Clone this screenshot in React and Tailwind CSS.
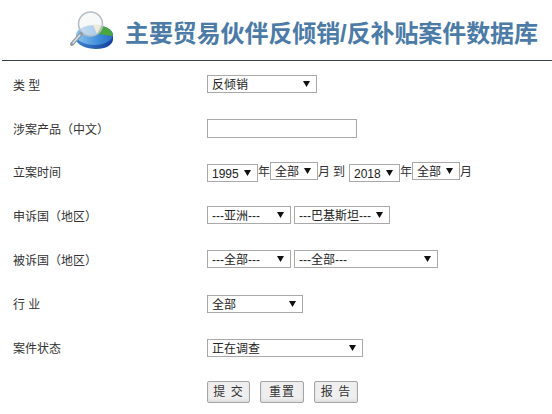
const Sel = ({ w, value, className = '' }) => (
  <div className={`relative shrink-0 h-[18px] ${w} ${className}`}>
    <select
      defaultValue={value}
      className="block w-full h-full appearance-none bg-white border border-[#a9a9a9] pl-[4px] pr-3 pt-[2px] text-[12px] leading-[14px] text-[#222] outline-none rounded-none"
    >
      <option>{value}</option>
    </select>
    <svg className="absolute right-[7px] top-[6px] pointer-events-none" width="7" height="6" viewBox="0 0 7 6">
      <path d="M0 0H7L3.5 6Z" fill="#111" />
    </svg>
  </div>
);

const Row = ({ label, children, labelClass = 'mt-[2px]', fieldClass = '' }) => (
  <div className="grid grid-cols-[207px_1fr] items-center h-[44px]">
    <div className={`pl-[13px] text-[12px] text-[#333] [text-spacing-trim:space-all] ${labelClass}`}>{label}</div>
    <div className={`flex items-center ${fieldClass}`}>{children}</div>
  </div>
);

const Btn = ({ children, w = 'w-[44px]' }) => (
  <button className={`${w} h-[22px] bg-[#efefef] border border-[#a5a5a5] rounded-[2px] text-[12px] tracking-[1px] text-[#333] shadow-[inset_0_-2px_3px_#dedede]`}>
    {children}
  </button>
);

function Logo() {
  return (
    <svg width="46" height="40" viewBox="0 0 46 40">
      <defs>
        <linearGradient id="pie" x1="0" y1="0" x2="1" y2="0">
          <stop offset="0" stopColor="#8cc4ee" />
          <stop offset="0.6" stopColor="#3f8fdb" />
          <stop offset="1" stopColor="#2a6cc0" />
        </linearGradient>
        <linearGradient id="side" x1="0" y1="0" x2="1" y2="0">
          <stop offset="0" stopColor="#3f86d2" />
          <stop offset="1" stopColor="#123f9c" />
        </linearGradient>
      </defs>
      <path d="M7 24V28C7 34 18 38 27 38C37 38 44 34 44 28V24Z" fill="url(#side)" />
      <ellipse cx="25.5" cy="24" rx="18.5" ry="10" fill="url(#pie)" />
      <path d="M30 15C37 15 44 19 44 25L29 23Z" fill="#4aa63f" />
      <path d="M24 14C27 13 30 14 32 15L28 23Z" fill="#e9dfae" />
      <circle cx="21.5" cy="13" r="12" fill="#f1f3f4" fillOpacity="0.6" stroke="#b4bdc5" strokeWidth="1.6" />
      <path d="M12 23L3 33" stroke="#8d9aa6" strokeWidth="4" strokeLinecap="round" />
      <path d="M11 24L4 32" stroke="#dfe6ea" strokeWidth="1.2" strokeLinecap="round" />
    </svg>
  );
}

export default function App() {
  return (
    <div className="w-[552px] h-[414px] overflow-hidden bg-white font-['Liberation_Sans','Noto_Sans_CJK_SC',sans-serif]">
      <div className="h-[61px] ml-[2px] border-b border-[#34424f] flex items-start">
        <div className="ml-[67px] mt-[11px]"><Logo /></div>
        <h1 className="ml-[10px] mt-[18px] text-[24px] leading-[32px] font-bold tracking-[-0.1px] whitespace-nowrap text-[#4b7ba6]">
          主要贸易伙伴反倾销/反补贴案件数据库
        </h1>
      </div>

      <div className="pt-[1px]">
        <Row label="类 型" labelClass="mt-[4px]"><Sel w="w-[110px]" value="反倾销" /></Row>
        <Row label="涉案产品（中文）" labelClass="mt-[4px]">
          <input className="w-[150px] h-[19px] bg-white border border-[#a9a9a9] outline-none" />
        </Row>
        <Row label="立案时间">
          <div className="flex items-center text-[12px] text-[#333] whitespace-nowrap">
            <Sel w="w-[51px]" value="1995" className="mt-[2px]" />
            <span className="w-[12px]">年</span>
            <Sel w="w-[48px]" value="全部" className="mb-[2px]" />
            <span className="w-[15px]">月</span>
            <span className="w-[16px]">到</span>
            <Sel w="w-[51px]" value="2018" className="mt-[2px]" />
            <span className="w-[12px]">年</span>
            <Sel w="w-[48px]" value="全部" className="mb-[2px]" />
            <span>月</span>
          </div>
        </Row>
        <Row label="申诉国（地区）" fieldClass="mb-[2px]">
          <div className="flex gap-[3px]">
            <Sel w="w-[84px]" value="---亚洲---" />
            <Sel w="w-[96px]" value="---巴基斯坦---" />
          </div>
        </Row>
        <Row label="被诉国（地区）" fieldClass="mb-[2px]">
          <div className="flex gap-[3px]">
            <Sel w="w-[84px]" value="---全部---" />
            <Sel w="w-[144px]" value="---全部---" />
          </div>
        </Row>
        <Row label="行 业"><Sel w="w-[96px]" value="全部" /></Row>
        <Row label="案件状态"><Sel w="w-[156px]" value="正在调查" /></Row>
        <div className="pl-[207px] pt-[11px] flex gap-[10px]">
          <Btn w="w-[43px]">提 交</Btn>
          <Btn>重置</Btn>
          <Btn>报 告</Btn>
        </div>
      </div>
    </div>
  );
}
